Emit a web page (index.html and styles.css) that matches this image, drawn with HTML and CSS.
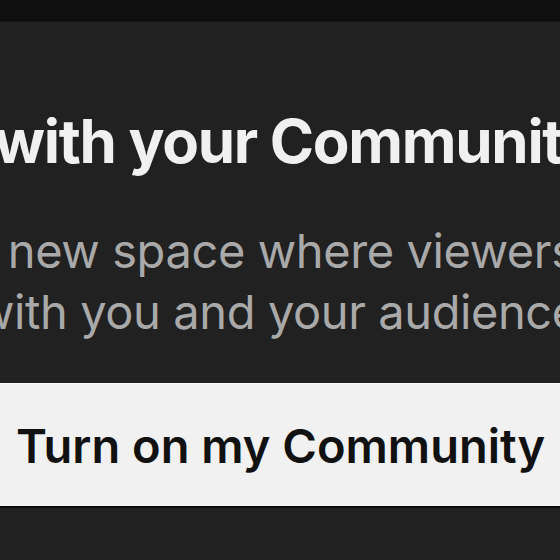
FILE: index.html
```html
<!DOCTYPE html>
<html lang="en">
  <head>
    <meta charset="UTF-8" />
    <meta name="viewport" content="width=device-width, initial-scale=1.0" />
    <title>Community</title>
    <link rel="stylesheet" href="styles.css">
  </head>
  <body>
    <div class="topbar"></div>
    <main class="panel">
      <h1 class="title">with your Community</h1>
      <p class="lead">
        <span class="line line-one">a new space where viewers can</span>
        <span class="line line-two">with you and your audience</span>
      </p>
      <button class="cta">Turn on my Community</button>
    </main>
  </body>
</html>
```

FILE: styles.css
```css
html,
body {
  margin: 0;
  padding: 0;
  height: 100%;
}
body {
  font-family: Inter, "Noto Sans", sans-serif;
  background-color: #212121;
  overflow: hidden;
}
.topbar {
  height: 21px;
  background-color: #0f0f0f;
  border-bottom: 1px solid #161616;
}
.panel {
  display: flex;
  flex-direction: column;
  overflow: hidden;
}
.title {
  margin: 0;
  margin-top: 89px;
  margin-left: -6px;
  font-size: 60px;
  line-height: 60px;
  font-weight: 700;
  letter-spacing: -1.3px;
  color: #f0f0f0;
  white-space: nowrap;
}
.lead {
  display: flex;
  flex-direction: column;
  margin: 0;
  margin-top: 49px;
  font-size: 47px;
  line-height: 61px;
  font-weight: 400;
  letter-spacing: -0.4px;
  color: #a9a9a9;
  white-space: nowrap;
}
.line-one {
  margin-left: -31px;
}
.line-two {
  margin-left: -24px;
}
.cta {
  margin-top: 41px;
  height: 125px;
  border: none;
  border-top: 1px solid #fafafa;
  border-bottom: 2px solid #0a0a0a;
  background-color: #f1f1f1;
  color: #111;
  font-family: inherit;
  font-size: 47px;
  font-weight: 600;
  letter-spacing: 0;
  text-align: left;
  padding: 0 0 0 16px;
  white-space: nowrap;
}
```
